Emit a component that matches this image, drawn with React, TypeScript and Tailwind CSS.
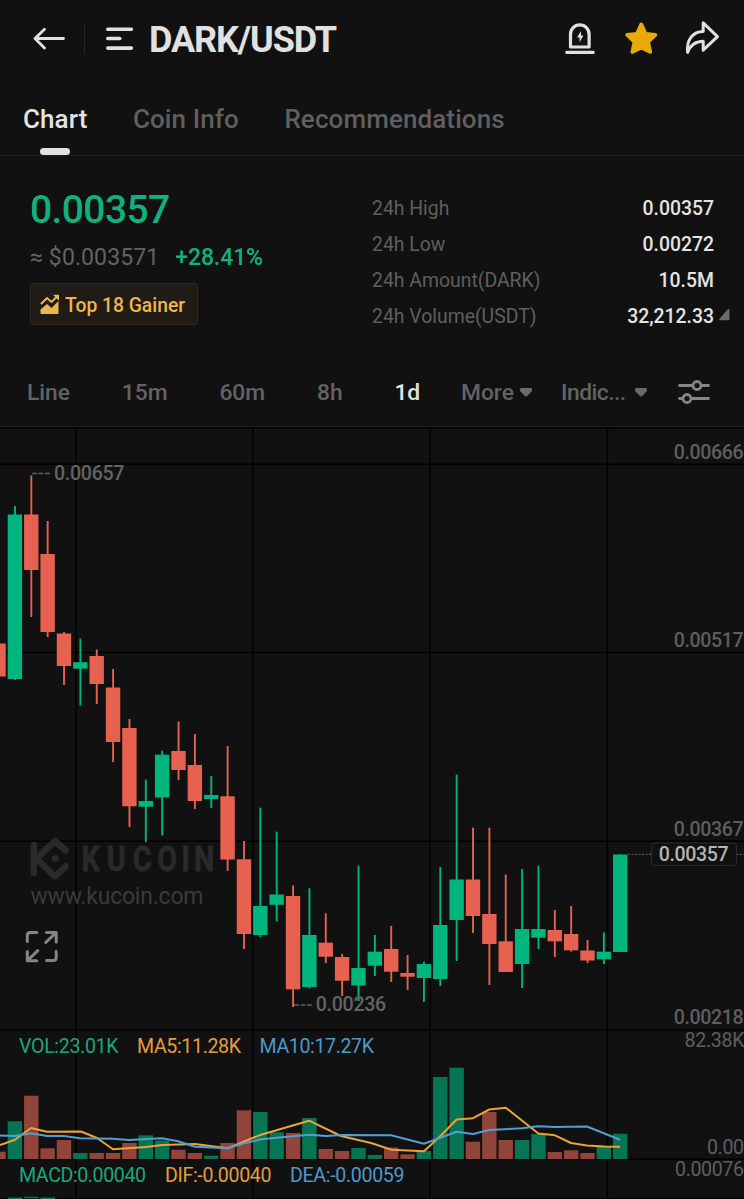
import { useState } from "react";
import clsx from "clsx";

// [direction, high, body top, body bottom, low, volume top]
type Candle = ["u" | "d", number, number, number, number, number];

const candles: Candle[] = [
  ["d", 643.5, 643.5, 676.5, 676.5, 1151.7],
  ["u", 506, 514.5, 679, 680, 1121.3],
  ["d", 475.5, 514.5, 570, 617, 1095.7],
  ["d", 521, 554, 632, 637, 1148.3],
  ["d", 632, 633.5, 666, 685, 1140],
  ["u", 638.5, 662.3, 668.7, 705.5, 1153],
  ["d", 649.5, 656, 684, 704, 1153],
  ["d", 669, 687.5, 742, 762, 1153],
  ["d", 719, 728, 806.3, 827, 1143],
  ["u", 779.7, 801, 806.7, 842, 1135.3],
  ["u", 750.7, 754.7, 797.5, 835.5, 1140.5],
  ["d", 721.5, 751, 770, 780, 1149.7],
  ["d", 734, 765, 801, 809, 1153],
  ["u", 776, 795, 799, 808, 1155.7],
  ["d", 746, 796.3, 859.5, 871, 1143],
  ["d", 841, 859.3, 934, 949, 1110.3],
  ["u", 807.7, 906, 935, 937, 1112],
  ["u", 831.7, 894.5, 904.8, 921.5, 1132.3],
  ["d", 885.5, 896, 989.3, 1007, 1133],
  ["u", 888.3, 935, 987, 988.5, 1118],
  ["d", 913.3, 942.7, 956.7, 963, 1149],
  ["d", 954, 957, 980.7, 996, 1151],
  ["u", 865.7, 968, 985.5, 1001, 1148],
  ["u", 935, 951.7, 965.7, 976, 1155],
  ["d", 926, 949, 971.7, 982, 1147.5],
  ["d", 955, 973, 976.7, 990, 1154.3],
  ["u", 961.7, 964, 978, 1002, 1151],
  ["u", 867, 925, 979, 986, 1077],
  ["u", 774.7, 879.5, 920, 961, 1067.7],
  ["d", 827.7, 879.5, 916, 933, 1141.7],
  ["d", 827.7, 914, 944, 985, 1112],
  ["d", 874.5, 941.3, 972, 972, 1140],
  ["u", 869, 929, 964, 988, 1140],
  ["u", 865.7, 929, 937.7, 949, 1134],
  ["d", 910, 930, 941.3, 957, 1152],
  ["d", 906, 934, 950.3, 951.7, 1150.3],
  ["d", 940, 950.5, 960.5, 963, 1153],
  ["u", 932.3, 951.7, 959.3, 964, 1147],
  ["u", 854.5, 854.5, 952, 952, 1133.7],
];

const STEP = 16.36;
const BASE = 1159;
const xOf = (i: number) => 14.9 + STEP * (i - 1);

const ma5 =
  "0,1145 15,1139.7 31,1128 47,1131.7 81,1131.5 97,1138 113,1149.3 146,1147 162,1145 195,1144 227.6,1148.3 244,1141.5 261,1134.7 309,1120.7 341,1136 371,1143 391.5,1149.8 424,1151.2 441,1135.5 456.6,1119.5 473,1118.2 489.3,1109.5 505.7,1107.7 538.4,1133.5 555,1135.3 571,1143 587,1145.5 604,1146.6 620,1146.8";
const ma10 =
  "0,1135.5 15,1136 31,1133.3 47,1136 64,1136 80,1138.3 113,1138.7 129,1140 162,1138.2 178,1141.3 195,1146.7 227.6,1148.2 244,1143.3 261,1139.3 309,1134.7 326,1136 342,1135 391,1135.3 424,1143.7 456.6,1131.7 473,1134 489,1130 522,1128.3 538,1126.3 555,1127 587,1126.5 620,1139.7";

const tabs = ["Chart", "Coin Info", "Recommendations"];

const stats = [
  ["24h High", "0.00357"],
  ["24h Low", "0.00272"],
  ["24h Amount(DARK)", "10.5M"],
  ["24h Volume(USDT)", "32,212.33"],
];

const intervals = ["Line", "15m", "60m", "8h", "1d"];

function Header() {
  return (
    <header className="flex h-[78px] shrink-0 items-center pl-8 pr-6 text-[#e1e1e1]">
      <svg width="34" height="24" viewBox="32 26.5 34 24" fill="none" stroke="currentColor" strokeWidth="2.8" strokeLinecap="round" strokeLinejoin="round">
        <path d="M63.5 38H35M44.5 28.7L35 38l9.5 9.6" />
      </svg>
      <div className="ml-[18px] h-[30px] w-px bg-[#262626]" />
      <svg className="ml-[21px]" width="28" height="24" viewBox="106 26.5 28 24" fill="none" stroke="currentColor" strokeWidth="3.6" strokeLinecap="round">
        <path d="M107.8 28.7h23.6M107.8 38h12M107.8 47.6h23.6" />
      </svg>
      <h1 className="ml-[15px] pt-0.5 text-[36px] font-bold leading-none tracking-[-1.1px]">DARK/USDT</h1>

      <div className="ml-auto flex items-center">
        <svg width="32" height="36" viewBox="565 21 32 36" fill="none" stroke="currentColor" strokeWidth="3.2" strokeLinecap="round" strokeLinejoin="round">
          <path d="M571.5 47V34.2a9.3 9.3 0 0 1 18.6 0V47zM567.8 52.4h26.4" />
          <path d="M582 31l-4 6.4h2.6v4.8l3.8-6.6H582z" fill="currentColor" stroke="none" />
        </svg>
        <svg className="ml-[27px]" width="36" height="36" viewBox="623.5 21 36 36" fill="#e9aa09" stroke="#e9aa09" strokeWidth="4" strokeLinejoin="round">
          <path d="M641.8 24.5l4.2 9.4 9.8 1-7.3 6.9 2.1 10-8.8-4.3-8.8 4.3 2.1-10-7.3-6.9 9.8-1z" />
        </svg>
        <svg className="ml-[25px]" width="36" height="36" viewBox="685 21 36 36" fill="none" stroke="currentColor" strokeWidth="3" strokeLinejoin="round" strokeLinecap="round">
          <path d="M704.2 22.8l14.3 13.8-14.3 13.6v-9c-8 .2-13 4-15.6 11.2C687.3 39.5 694 31.6 704.2 31.5z" />
        </svg>
      </div>
    </header>
  );
}

function GainerIcon() {
  return (
    <svg width="20" height="20" viewBox="0 0 20 20" fill="none">
      <path d="M1 10l6-6 4.5 4L17 2.5" stroke="#ecb64e" strokeWidth="2" />
      <path d="M13 .7h6v6z" fill="#ecb64e" />
      <path d="M.5 15.5L7 10l4.5 4 7-7V19a1 1 0 0 1-1 1h-16a1 1 0 0 1-1-1z" fill="#ecb64e" />
    </svg>
  );
}

function Caret() {
  return (
    <svg className="shrink-0" width="12" height="9" viewBox="0 0 12 9" fill="#6a6a6a">
      <path d="M1.2 0h9.6q1.2 0 1.2 1.2v1.3q0 .6-.5 1L7.2 8Q6 9 4.8 8L.5 3.5Q0 3.1 0 2.5V1.2Q0 0 1.2 0z" />
    </svg>
  );
}

function Chart() {
  return (
    <svg className="block shrink-0" width="744" height="773" viewBox="0 426 744 773" fontFamily="Roboto, sans-serif">
      {/* grid */}
      <path d="M0 426.5H744" stroke="#1e1e1e" />
      <g stroke="#000" strokeWidth="1.4">
        <path d="M0 427.8H744M0 464.3H744M0 652.5H744M0 841.3H744M0 1029.7H744M0 1159.3H744M0 1198.7H744" />
        <path d="M76 427V1199M253 427V1199M430.3 427V1199M607.5 427V1199" />
      </g>

      {/* watermark */}
      <g fill="none" stroke="#292a2c" strokeWidth="6.5" strokeLinecap="round" strokeLinejoin="round">
        <path d="M33.8 845v28" />
        <path d="M65.5 850.5L55 841 36.5 858.7 55 876.5l10.5-10" />
        <circle cx="55.3" cy="858.5" r="3.6" fill="#292a2c" stroke="none" />
      </g>
      <text transform="scale(0.8 1)" x="101.9 133.5 166 196.5 226.8 242.4" y="871.5" fill="#292a2c" stroke="#292a2c" strokeWidth="0.8" fontSize="36" fontWeight="700">
        KUCOIN
      </text>
      <text x="30.5" y="903.5" fill="#3a3a3b" fontSize="23" textLength="173">www.kucoin.com</text>

      {/* candles and volume */}
      {candles.map(([dir, high, top, bottom, low, vol], i) => {
        const x = xOf(i);
        const color = dir === "u" ? "#00b57e" : "#e76150";
        return (
          <g key={i}>
            <rect x={x - 0.9} y={high} width="1.9" height={low - high} fill={color} />
            <rect x={x - 7.2} y={top} width="14.4" height={bottom - top} fill={color} />
            <rect x={x - 7.2} y={vol} width="14.4" height={BASE - vol} fill={dir === "u" ? "#077553" : "#91443a"} />
          </g>
        );
      })}
      <g fill="none" strokeWidth="2" strokeLinejoin="round">
        <polyline points={ma5} stroke="#eda337" />
        <polyline points={ma10} stroke="#4f9fd3" />
      </g>
      <path d="M8 1198.3h14M24 1197.5h14.5M40.5 1198.3h14.5" stroke="#077553" strokeWidth="1.6" />

      {/* high / low marks */}
      <g fontSize="19.6" fontWeight="500" fill="#626366">
        <path d="M32 473.5h18M294 1005h18" stroke="#626366" strokeWidth="1.5" strokeDasharray="5 1.5" />
        <text x="54" y="479.5" textLength="70.5">0.00657</text>
        <text x="315.7" y="1011.3" textLength="70.5">0.00236</text>
      </g>

      {/* price axis */}
      <g fontSize="19.6" fill="#5e5e60">
        <g fontWeight="500">
          <text x="673.7" y="458.7" textLength="70">0.00666</text>
          <text x="673.7" y="647.3" textLength="70">0.00517</text>
          <text x="673.7" y="835.6" textLength="70">0.00367</text>
          <text x="673.7" y="1024.2" textLength="70">0.00218</text>
        </g>
        <text x="684.5" y="1047" textLength="60">82.38K</text>
        <text x="707" y="1153.7" textLength="37">0.00</text>
        <text x="675" y="1176.3" textLength="69">0.00076</text>
      </g>
      <path d="M628 854.3H744" stroke="#555" strokeWidth="1.2" strokeDasharray="2 1.5" />
      <rect x="651.5" y="843" width="85" height="22.5" rx="3" fill="#111" stroke="#2a2a2a" />
      <text x="658.7" y="860.5" fontSize="19.6" fontWeight="500" fill="#b4b4b4" textLength="70">0.00357</text>

      {/* indicator captions */}
      <g fontSize="19.6">
        <text x="19" y="1052.6" fill="#1da57a" textLength="99.5">VOL:23.01K</text>
        <text x="137" y="1052.6" fill="#e39e3d" textLength="104">MA5:11.28K</text>
        <text x="259.5" y="1052.6" fill="#4c99ca" textLength="114.5">MA10:17.27K</text>
        <text x="19" y="1182.3" fill="#1da57a" textLength="127">MACD:0.00040</text>
        <text x="165" y="1182.3" fill="#e39e3d" textLength="106.5">DIF:-0.00040</text>
        <text x="290" y="1182.3" fill="#4c99ca" textLength="114.5">DEA:-0.00059</text>
      </g>

      {/* fullscreen */}
      <g fill="none" stroke="#858585" strokeWidth="3" strokeLinecap="round" strokeLinejoin="round">
        <path d="M36.8 932.5h-6.5q-3 0-3 3v6M46.5 932.5h9.7v9.5M55.5 933.2l-9.8 9.3" />
        <path d="M56.2 951.5v6q0 3-3 3h-6.7M27.3 951.5v9.3h9.5M28 960l9.8-9.3" />
      </g>
    </svg>
  );
}

export default function App() {
  const [tab, setTab] = useState("Chart");
  const [interval, setInterval] = useState("1d");

  return (
    <div className="flex h-[1199px] w-[744px] flex-col overflow-hidden bg-[#111111] font-['Roboto',sans-serif]">
      <Header />

      <nav className="flex h-[78px] shrink-0 gap-[45.5px] border-b border-[#1d1d1d] pl-[23px]">
        {tabs.map((t) => (
          <button
            key={t}
            onClick={() => setTab(t)}
            className={clsx(
              "flex flex-col items-center pt-[25px] text-[26px] font-medium leading-8 tracking-[0.1px]",
              t === tab ? "text-[#e4e4e4]" : "text-[#5f5f5f]"
            )}
          >
            {t}
            {t === tab && <span className="mt-[13px] h-2 w-[30px] rounded-full bg-[#e1e1e1]" />}
          </button>
        ))}
      </nav>

      <section className="flex h-[202px] shrink-0 pl-[30px] pt-[34px]">
        <div className="w-[342px]">
          <p className="text-[39px] font-medium leading-[41px] tracking-[-0.6px] text-[#10b17e]">0.00357</p>
          <div className="mt-3 flex gap-4 text-[23px] leading-[30px]">
            <span className="tracking-[0.1px] text-[#636363]">≈ $0.003571</span>
            <span className="font-medium tracking-[-0.1px] text-[#10b17e]">+28.41%</span>
          </div>
          <div className="mt-[10px] flex h-[42px] w-[168px] items-center gap-[5px] rounded border border-[#30291e] bg-[#201b15] pl-[9px] text-[19.3px] font-medium text-[#ecb64e]">
            <GainerIcon />
            <span className="whitespace-nowrap pt-1">Top 18 Gainer</span>
          </div>
        </div>
        <div className="flex w-[342px] flex-col">
          {stats.map(([label, value]) => (
            <div key={label} className="flex h-9 items-center justify-between pt-px text-[19.4px]">
              <span className="text-[#5f5f5f]">{label}</span>
              <span className="font-medium text-[#e4e4e4]">{value}</span>
            </div>
          ))}
        </div>
        <svg className="ml-[5px] mt-[119px]" width="11" height="12" viewBox="0 0 11 12" fill="#6a6a6a">
          <path d="M8.5.6Q10.5-1 10.5 1.5V10q0 1.2-1.2 1.2H1.5Q-.5 11.2.8 9.5z" />
        </svg>
      </section>

      <div className="flex h-[68px] shrink-0 items-center pl-[27px] text-[22.8px] font-medium text-[#636363]">
        <div className="flex w-[434px] gap-[51.8px] pt-[2px]">
          {intervals.map((t) => (
            <button key={t} onClick={() => setInterval(t)} className={clsx(t === interval && "text-[#e4e4e4]")}>
              {t}
            </button>
          ))}
        </div>
        <button className="flex w-[100px] items-center gap-[6px]">
          <span className="pt-[2px]">More</span>
          <Caret />
        </button>
        <button className="flex w-[116px] items-center gap-[9px]">
          <span className="pt-[2px] tracking-[-0.5px]">Indic...</span>
          <Caret />
        </button>
        <svg width="34" height="26" viewBox="677 379 34 26" fill="none" stroke="#858585" strokeWidth="2.8" strokeLinecap="round">
          <path d="M679.5 385.5h13M701.5 385.5h7M679.5 398.5h3M691.5 398.5h17" />
          <circle cx="697" cy="385.5" r="4" />
          <circle cx="687" cy="398.5" r="4" />
        </svg>
      </div>

      <Chart />
    </div>
  );
}
